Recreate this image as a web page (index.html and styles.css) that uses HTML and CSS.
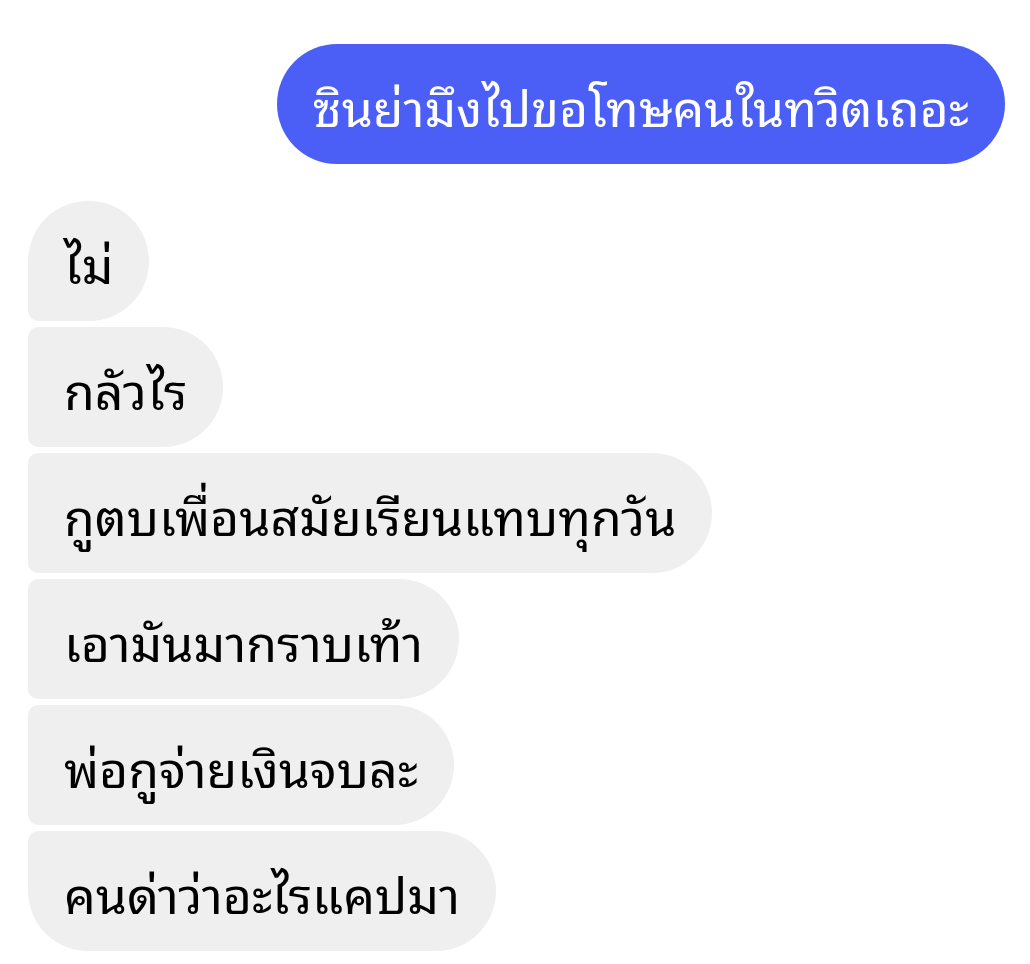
FILE: index.html
```html
<!DOCTYPE html>
<html lang="th">
<head>
<meta charset="utf-8">
<title>Chat</title>
<link rel="stylesheet" href="styles.css">
</head>
<body>
<main class="chat">
  <div class="row row-out">
    <div class="bubble out">ซินย่ามึงไปขอโทษคนในทวิตเถอะ</div>
  </div>
  <div class="group">
    <div class="bubble in first">ไม่</div>
    <div class="bubble in">กลัวไร</div>
    <div class="bubble in">กูตบเพื่อนสมัยเรียนแทบทุกวัน</div>
    <div class="bubble in">เอามันมากราบเท้า</div>
    <div class="bubble in">พ่อกูจ่ายเงินจบละ</div>
    <div class="bubble in last">คนด่าว่าอะไรแคปมา</div>
  </div>
</main>
</body>
</html>
```
FILE: styles.css
```css
html, body {
  margin: 0;
  padding: 0;
  background: #ffffff;
}
.chat {
  display: flex;
  flex-direction: column;
  padding: 44px 25px 0 28px;
  gap: 37px;
  font-family: "Noto Sans Thai Looped", "Loma", "Garuda", "Noto Sans Thai", "Noto Sans", sans-serif;
}
.row-out {
  display: flex;
  justify-content: flex-end;
}
.group {
  display: flex;
  flex-direction: column;
  align-items: flex-start;
  gap: 6px;
}
.bubble {
  box-sizing: border-box;
  height: 120px;
  display: flex;
  align-items: center;
  font-size: 50px;
  white-space: nowrap;
  border-radius: 60px;
}
.out {
  background: #4b5ff7;
  color: #ffffff;
  padding: 0 36px;
}
.in {
  background: #efefef;
  color: #000000;
  padding: 0 36px;
  border-radius: 10px 60px 60px 10px;
}
.in.first {
  border-top-left-radius: 60px;
}
.in.last {
  border-bottom-left-radius: 60px;
}
```
